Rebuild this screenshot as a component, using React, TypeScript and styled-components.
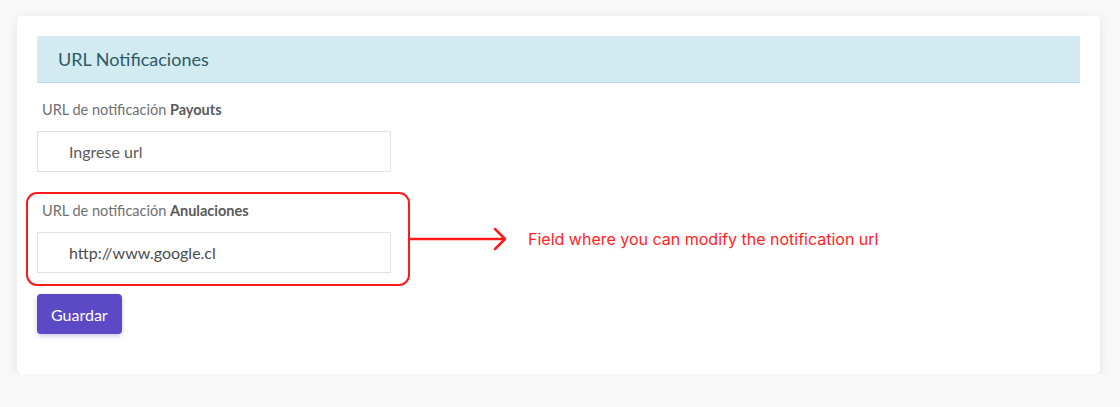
import React from "react"
import styled, { createGlobalStyle } from "styled-components"

const GlobalStyle = createGlobalStyle`
    html, body {
        margin: 0;
        padding: 0;
        background: #f8f8f8;
        font-family: Lato, "Open Sans", sans-serif;
    }
`

const Page = styled.div`
    padding: 16px 20px 0 17px;
`

const Card = styled.div`
    width: 1083px;
    box-sizing: border-box;
    padding: 20px 20px 40px 20px;
    background: #fff;
    border-radius: 5px;
    box-shadow: 0 3px 12px rgba(0, 0, 0, 0.09);
`

const Header = styled.div`
    height: 47px;
    box-sizing: border-box;
    display: flex;
    align-items: center;
    padding-left: 21px;
    background: #d1ebf0;
    border-bottom: 1px solid #b9e2ea;
    border-radius: 2px 2px 0 0;
    color: #2f5a66;
    font-size: 18px;
`

const Form = styled.div`
    display: flex;
    flex-direction: column;
    gap: 7px;
    padding-top: 8px;
    margin-left: -11px;
`

const Field = styled.div<{ $highlight?: boolean }>`
    position: relative;
    width: 384px;
    box-sizing: border-box;
    padding: 8px 17px 11px 9px;
    border: 2px solid ${(p) => (p.$highlight ? "#ff1a1a" : "transparent")};
    border-radius: 11px;
`

const Label = styled.div`
    padding-left: 5px;
    margin-bottom: 12px;
    font-size: 14.5px;
    line-height: 18px;
    color: #707070;

    b {
        color: #5a5a5a;
        font-weight: 700;
    }
`

const Input = styled.input`
    display: block;
    width: 100%;
    height: 41px;
    box-sizing: border-box;
    padding: 0 0 0 31px;
    border: 1px solid #e2e2e2;
    font-family: Lato, "Open Sans", sans-serif;
    font-size: 16px;
    color: #4d4d4d;
    outline: none;

    &::placeholder {
        color: #5a5a5a;
    }
`

const Annotation = styled.div`
    position: absolute;
    top: 0;
    bottom: 0;
    left: 100%;
    display: flex;
    align-items: center;
    gap: 21px;
    white-space: nowrap;
`

const Note = styled.span`
    font-family: Inter, sans-serif;
    font-size: 16px;
    color: #ff2424;
`

const SaveButton = styled.button`
    align-self: flex-start;
    margin: 1px 0 0 11px;
    height: 40px;
    padding: 0 14px;
    border: none;
    border-radius: 4px;
    background: #5b49c6;
    color: #fff;
    font-family: Lato, "Open Sans", sans-serif;
    font-size: 16px;
    box-shadow: 0 2px 5px rgba(91, 73, 198, 0.3);
`

function Arrow() {
    return (
        <svg width="99" height="24" viewBox="0 0 99 24">
            <line x1="0" y1="12" x2="97" y2="12" stroke="#ff1a1a" strokeWidth="2.5" />
            <polyline
                points="87,2 97,12 87,22"
                fill="none"
                stroke="#ff1a1a"
                strokeWidth="2.5"
                strokeLinecap="round"
                strokeLinejoin="round"
            />
        </svg>
    )
}

const App: React.FC = () => {
    return (
        <>
            <GlobalStyle />
            <Page>
                <Card>
                    <Header>URL Notificaciones</Header>
                    <Form>
                        <Field>
                            <Label>
                                URL de notificación <b>Payouts</b>
                            </Label>
                            <Input placeholder="Ingrese url" />
                        </Field>
                        <Field $highlight>
                            <Label>
                                URL de notificación <b>Anulaciones</b>
                            </Label>
                            <Input defaultValue="http://www.google.cl" />
                            <Annotation>
                                <Arrow />
                                <Note>Field where you can modify the notification url</Note>
                            </Annotation>
                        </Field>
                        <SaveButton>Guardar</SaveButton>
                    </Form>
                </Card>
            </Page>
        </>
    )
}

export default App
